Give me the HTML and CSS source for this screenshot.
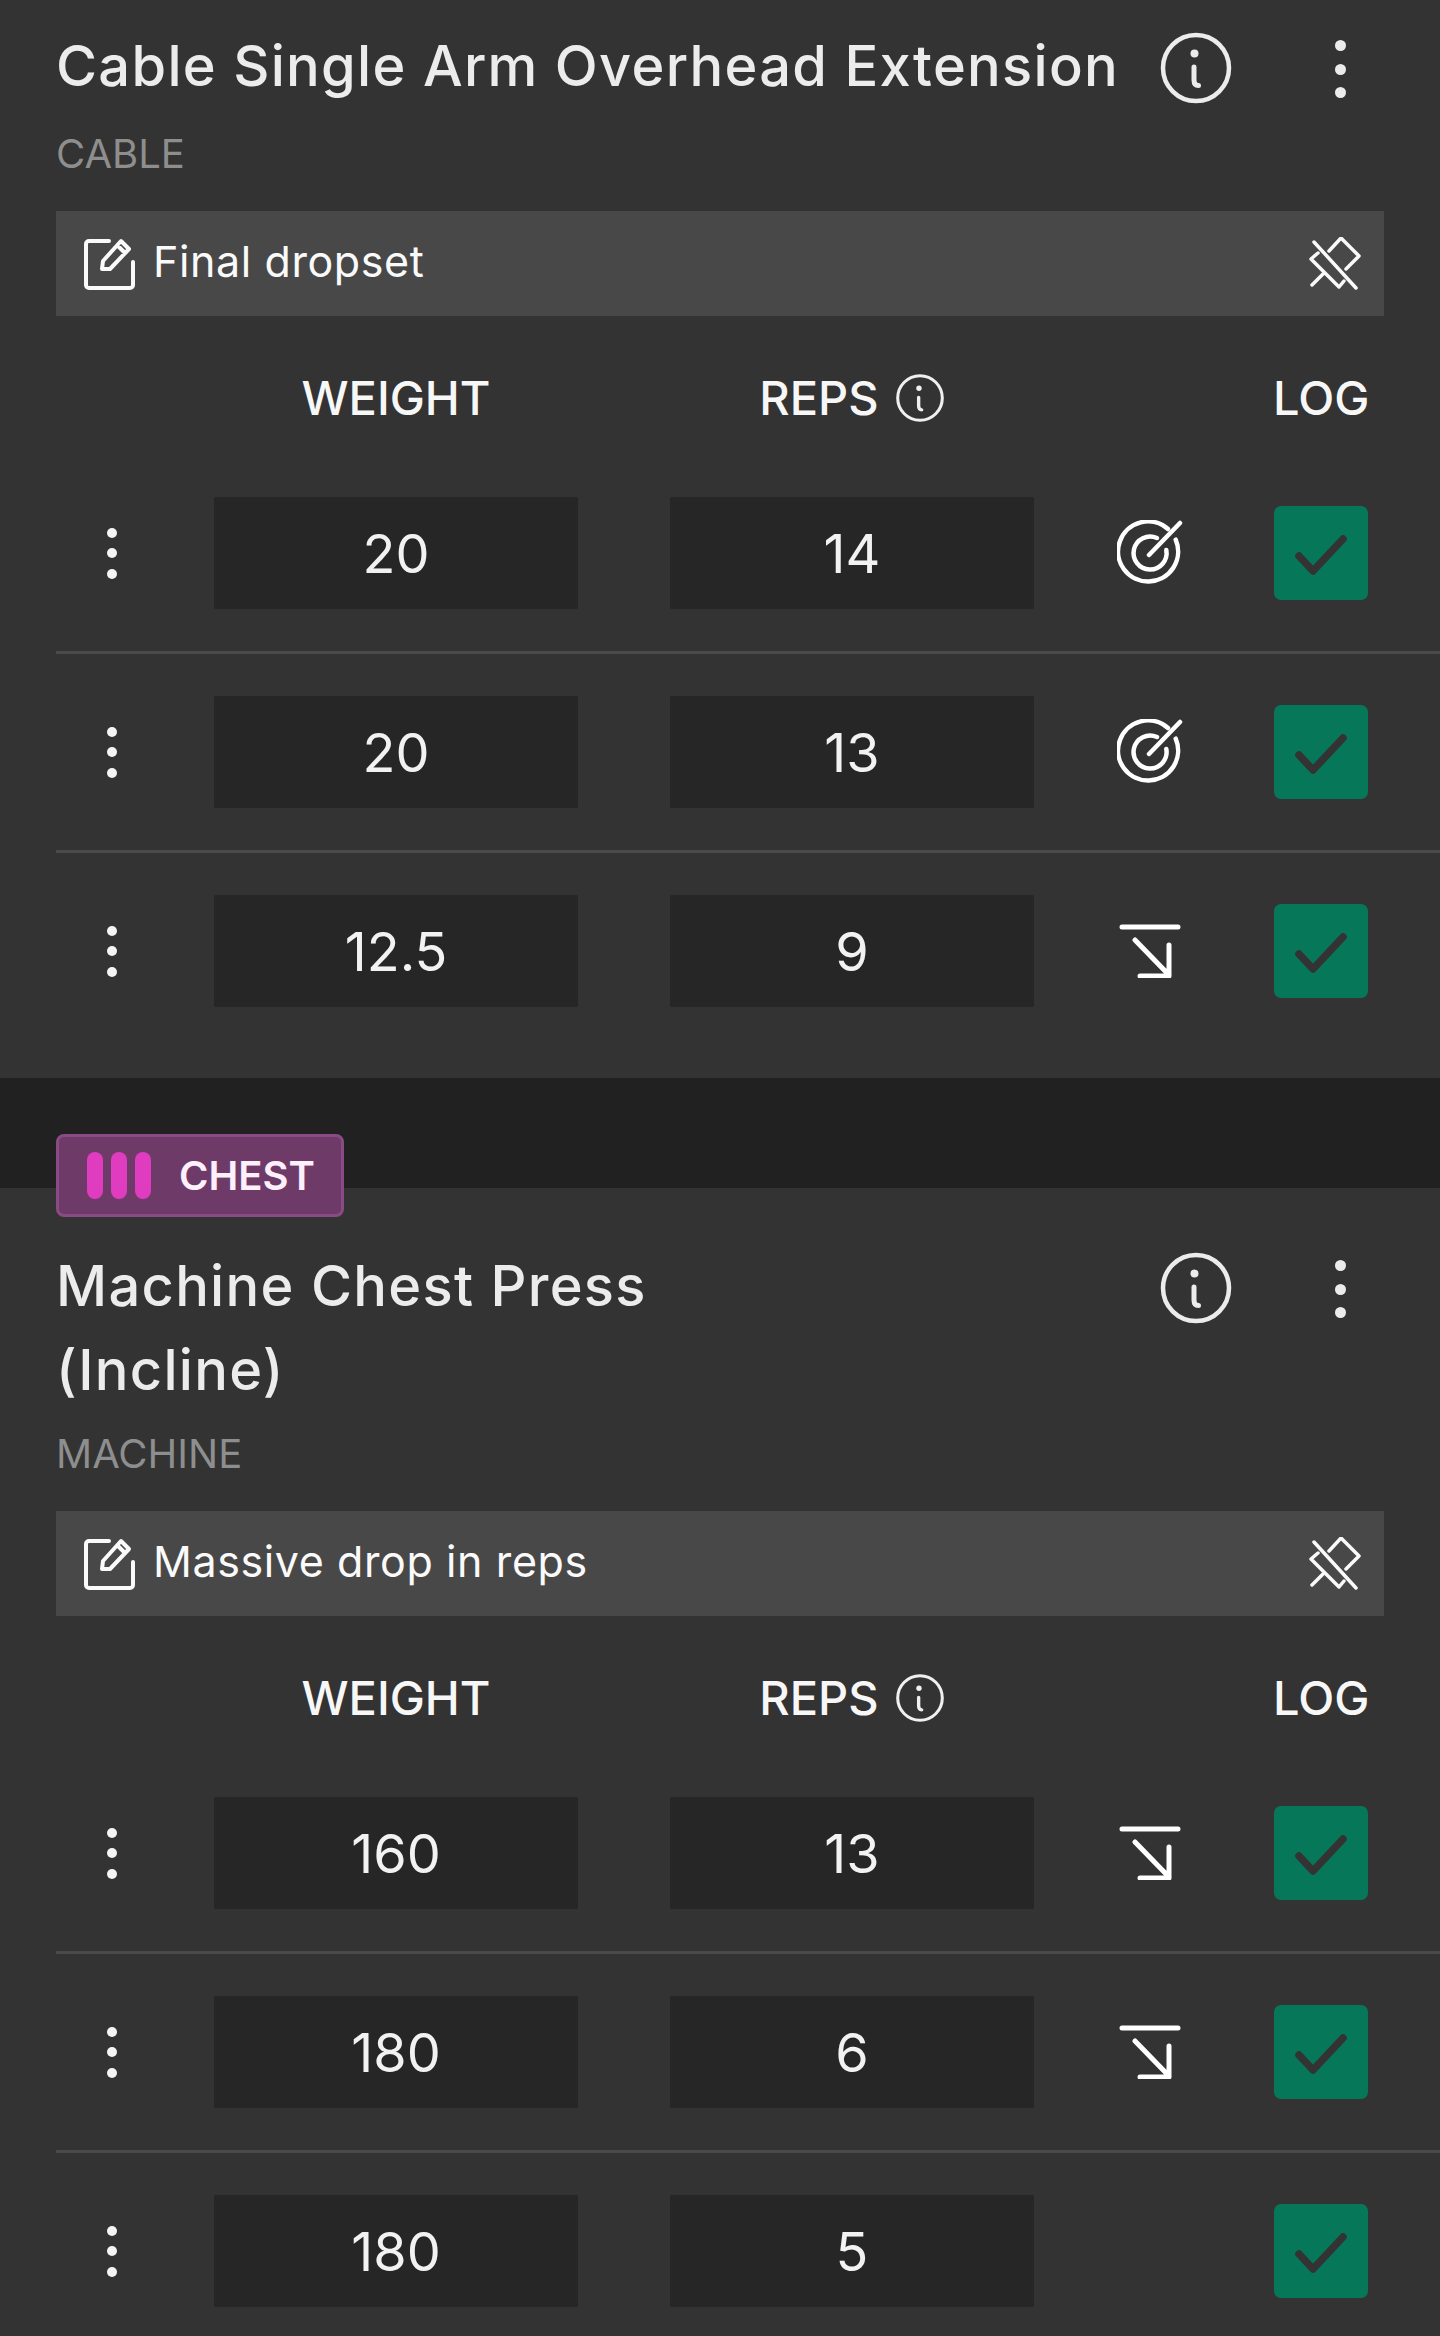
FILE: index.html
```html
<!DOCTYPE html>
<html lang="en">
<head>
<meta charset="utf-8">
<title>Workout log</title>
<link rel="stylesheet" href="styles.css">
</head>
<body>
<svg class="defs" width="0" height="0" aria-hidden="true">
  <symbol id="i-info" viewBox="0 0 74 74"><circle cx="37" cy="37" r="33" fill="none" stroke="currentColor" stroke-width="4.5"/><circle cx="35.500" cy="22.500" r="4" fill="currentColor"/><path d="M35 36v13q0 5.500 4.500 5.500" fill="none" stroke="currentColor" stroke-width="5" stroke-linecap="round"/></symbol>
  <symbol id="i-edit" viewBox="0 0 52 52"><path d="M25 3H5a3 3 0 0 0-3 3v41a3 3 0 0 0 3 3h41a3 3 0 0 0 3-3V24" fill="none" stroke="currentColor" stroke-width="4" stroke-linecap="round"/><path d="M18 31l1-8L37 3l8 8-19 20zM33 7l8 8" fill="none" stroke="currentColor" stroke-width="4" stroke-linejoin="round"/></symbol>
  <symbol id="i-pin" viewBox="0 0 54 54"><path d="M5 5l42 46M20 14l12-13 18 18-13 13M9 16l-7 6 28 28 5-6M3 48l12-12" fill="none" stroke="currentColor" stroke-width="3.500" stroke-linecap="round" stroke-linejoin="round"/></symbol>
  <symbol id="i-target" viewBox="0 0 66 66"><path d="M58.700 19.700A30 30 0 1 1 51 9" fill="none" stroke="currentColor" stroke-width="4.500" stroke-linecap="round"/><path d="M49.300 30A16.500 16.500 0 1 1 40 18" fill="none" stroke="currentColor" stroke-width="4.500" stroke-linecap="round"/><path d="M32 35L63 3" fill="none" stroke="currentColor" stroke-width="4.500" stroke-linecap="round"/></symbol>
  <symbol id="i-drop" viewBox="0 0 62 54"><path d="M3 3h56M16 16l34 35M50 21v31H21" fill="none" stroke="currentColor" stroke-width="5" stroke-linecap="round" stroke-linejoin="round"/></symbol>
  <symbol id="i-check" viewBox="0 0 94 94"><path d="M25 50l14 15 30-32" fill="none" stroke="currentColor" stroke-width="7.500" stroke-linecap="round" stroke-linejoin="round"/></symbol>
</svg>

<section class="exercise">
  <header class="title-row">
    <h2 class="title">Cable Single Arm Overhead Extension</h2>
    <svg class="icon-info"><use href="#i-info"/></svg>
    <div class="kebab kebab-lg"><i></i><i></i><i></i></div>
  </header>
  <p class="equipment">CABLE</p>
  <div class="note">
    <svg class="icon-edit"><use href="#i-edit"/></svg>
    <span class="note-text">Final dropset</span>
    <svg class="icon-pin"><use href="#i-pin"/></svg>
  </div>
  <div class="columns">
    <span class="col-weight">WEIGHT</span>
    <span class="col-reps">REPS <svg class="icon-info-sm"><use href="#i-info"/></svg></span>
    <span class="col-log">LOG</span>
  </div>
  <div class="set">
    <div class="kebab"><i></i><i></i><i></i></div>
    <div class="cell">20</div>
    <div class="cell cell-reps">14</div>
    <div class="status"><svg class="icon-target"><use href="#i-target"/></svg></div>
    <div class="log"><svg class="icon-check"><use href="#i-check"/></svg></div>
  </div>
  <div class="set">
    <div class="kebab"><i></i><i></i><i></i></div>
    <div class="cell">20</div>
    <div class="cell cell-reps">13</div>
    <div class="status"><svg class="icon-target"><use href="#i-target"/></svg></div>
    <div class="log"><svg class="icon-check"><use href="#i-check"/></svg></div>
  </div>
  <div class="set">
    <div class="kebab"><i></i><i></i><i></i></div>
    <div class="cell">12.5</div>
    <div class="cell cell-reps">9</div>
    <div class="status"><svg class="icon-drop"><use href="#i-drop"/></svg></div>
    <div class="log"><svg class="icon-check"><use href="#i-check"/></svg></div>
  </div>
</section>

<div class="gap"></div>

<section class="exercise exercise-tagged">
  <div class="badge">
    <span class="bars"><i></i><i></i><i></i></span>
    <span class="badge-text">CHEST</span>
  </div>
  <header class="title-row">
    <h2 class="title">Machine Chest Press<br>(Incline)</h2>
    <svg class="icon-info"><use href="#i-info"/></svg>
    <div class="kebab kebab-lg"><i></i><i></i><i></i></div>
  </header>
  <p class="equipment">MACHINE</p>
  <div class="note">
    <svg class="icon-edit"><use href="#i-edit"/></svg>
    <span class="note-text">Massive drop in reps</span>
    <svg class="icon-pin"><use href="#i-pin"/></svg>
  </div>
  <div class="columns">
    <span class="col-weight">WEIGHT</span>
    <span class="col-reps">REPS <svg class="icon-info-sm"><use href="#i-info"/></svg></span>
    <span class="col-log">LOG</span>
  </div>
  <div class="set">
    <div class="kebab"><i></i><i></i><i></i></div>
    <div class="cell">160</div>
    <div class="cell cell-reps">13</div>
    <div class="status"><svg class="icon-drop"><use href="#i-drop"/></svg></div>
    <div class="log"><svg class="icon-check"><use href="#i-check"/></svg></div>
  </div>
  <div class="set">
    <div class="kebab"><i></i><i></i><i></i></div>
    <div class="cell">180</div>
    <div class="cell cell-reps">6</div>
    <div class="status"><svg class="icon-drop"><use href="#i-drop"/></svg></div>
    <div class="log"><svg class="icon-check"><use href="#i-check"/></svg></div>
  </div>
  <div class="set">
    <div class="kebab"><i></i><i></i><i></i></div>
    <div class="cell">180</div>
    <div class="cell cell-reps">5</div>
    <div class="status"></div>
    <div class="log"><svg class="icon-check"><use href="#i-check"/></svg></div>
  </div>
</section>
</body>
</html>
```

FILE: styles.css
```css
* { box-sizing: border-box; }
html, body { margin: 0; padding: 0; }
body {
  width: 1440px;
  height: 2336px;
  overflow: hidden;
  background: #333333;
  color: #f5f5f5;
  font-family: Inter, "Noto Sans", "Liberation Sans", sans-serif;
}
.defs { display: block; position: absolute; }
.exercise {
  background: #333333;
  padding: 24px 0 29px 56px;
}
.exercise-tagged { display: flow-root; padding-top: 0; }
.gap { height: 110px; background: #212121; }

.title-row {
  display: flex;
  align-items: flex-start;
  min-height: 88px;
}
.title {
  flex: 1;
  margin: 0;
  font-size: 56px;
  font-weight: 500;
  line-height: 84px;
  color: #ececec;
  letter-spacing: 1.3px;
}
.icon-info {
  width: 74px;
  height: 74px;
  margin-top: 7px;
  color: #ececec;
  flex: none;
}
.kebab {
  display: flex;
  flex-direction: column;
  align-items: center;
  width: 158px;
  padding-right: 46px;
  gap: 10.5px;
}
.kebab i {
  display: block;
  width: 10px;
  height: 10px;
  border-radius: 50%;
  background: #f5f5f5;
}
.kebab-lg {
  width: 70px;
  margin: 16px 65px 0 72px;
  padding-right: 0;
  gap: 12.5px;
  flex: none;
}
.kebab-lg i { width: 11px; height: 11px; background: #ececec; }

.equipment {
  margin: 12px 0 0;
  font-size: 40px;
  line-height: 60px;
  color: #8e8e8e;
}
.note {
  display: flex;
  align-items: center;
  width: 1328px;
  height: 105px;
  margin-top: 27px;
  padding: 0 21px 0 28px;
  background: #484848;
  color: #fafafa;
}
.icon-edit { width: 52px; height: 52px; flex: none; }
.note-text {
  flex: 1;
  margin-left: 17px;
  margin-bottom: 5px;
  font-size: 43px;
  letter-spacing: 0.6px;
}
.icon-pin { width: 54px; height: 54px; flex: none; }

.columns {
  height: 60px;
  margin-top: 52px;
  display: flex;
  align-items: center;
  font-size: 47px;
  font-weight: 500;
  line-height: 60px;
  color: #f7f7f7;
}
.col-weight { width: 364px; margin-left: 158px; text-align: center; }
.col-reps {
  width: 364px;
  margin-left: 92px;
  display: flex;
  align-items: center;
  justify-content: center;
  gap: 16px;
}
.col-log { margin-left: 239px; }
.icon-info-sm { width: 50px; height: 50px; flex: none; color: #f0f0f0; }

.columns + .set { margin-top: 27px; }
.set {
  display: flex;
  align-items: center;
  height: 199px;
  border-bottom: 3px solid #4a4a4a;
}
.set:last-child { border-bottom: 0; height: 196px; }
.cell {
  width: 364px;
  height: 112px;
  display: flex;
  align-items: center;
  justify-content: center;
  background: #262626;
  border-radius: 2px;
  font-size: 54px;
  color: #f2f2f2;
}
.cell-reps { margin-left: 92px; }
.status {
  width: 232px;
  display: flex;
  justify-content: center;
  color: #ffffff;
}
.icon-target { width: 66px; height: 66px; }
.icon-drop { width: 62px; height: 54px; }
.log {
  width: 94px;
  height: 94px;
  margin-left: 8px;
  background: #07775a;
  border-radius: 7px;
  color: #333333;
}
.icon-check { display: block; width: 94px; height: 94px; }

.badge {
  display: flex;
  align-items: center;
  width: 288px;
  height: 83px;
  margin-top: -54px;
  margin-bottom: 27px;
  padding-left: 28px;
  background: #6e3a68;
  border: 3px solid #8a4a86;
  border-radius: 8px;
}
.bars { display: flex; gap: 8px; }
.bars i {
  display: block;
  width: 16px;
  height: 47px;
  border-radius: 8px;
  background: #e03cc0;
}
.badge-text {
  margin-left: 28px;
  font-size: 40px;
  font-weight: 600;
  color: #fdf0fb;
}
```
